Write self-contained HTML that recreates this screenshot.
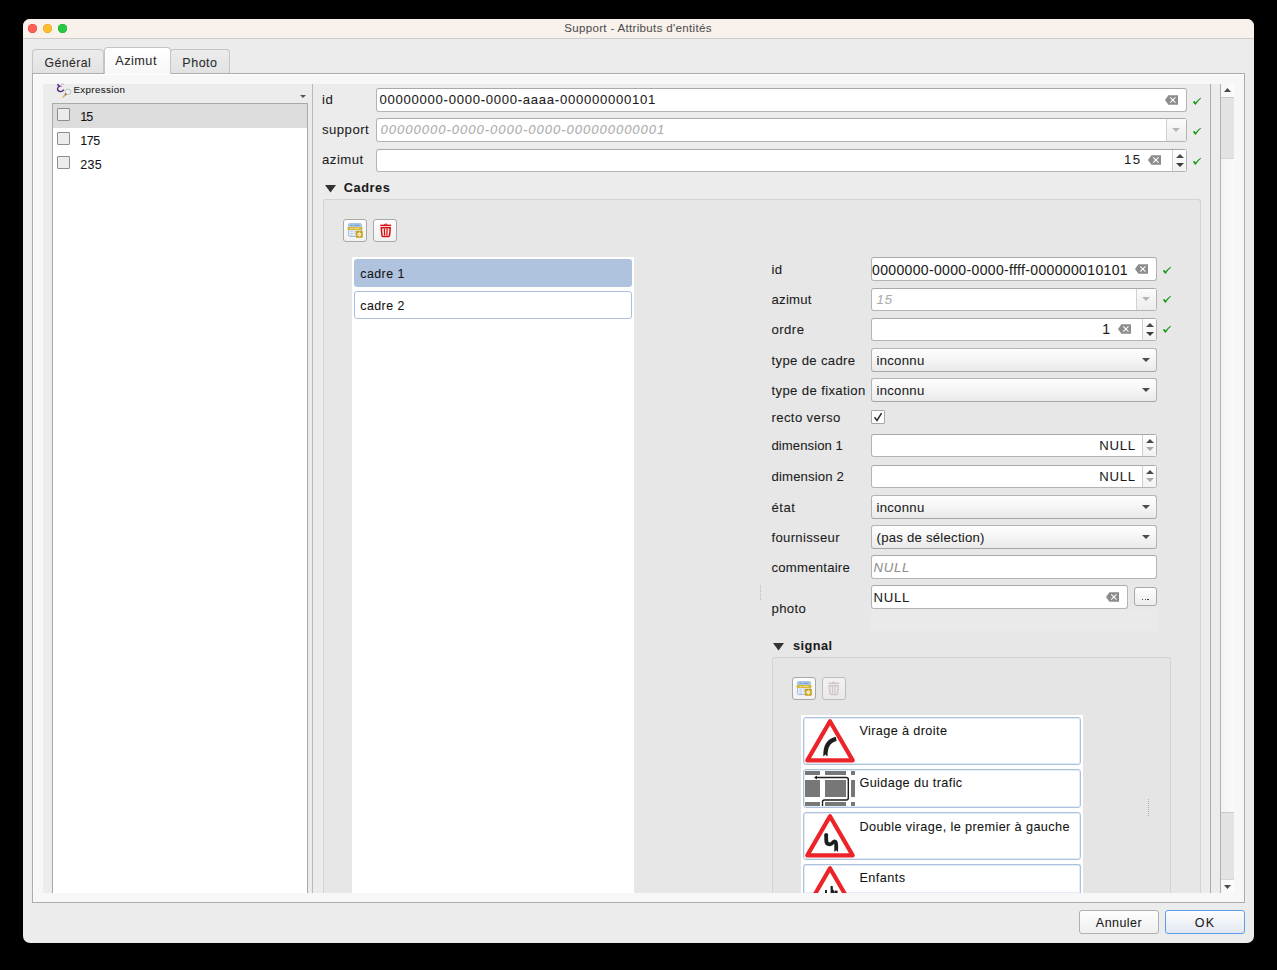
<!DOCTYPE html>
<html><head><meta charset="utf-8">
<style>
*{box-sizing:border-box;margin:0;padding:0}
html,body{width:1277px;height:970px;overflow:hidden;background:#000;font-family:"Liberation Sans",sans-serif;color:#1e1e1e}
.a{position:absolute}
.t{white-space:nowrap;-webkit-text-stroke:0.08px currentColor}
svg{overflow:visible}
</style></head><body>
<div class="a" style="left:23px;top:19px;width:1231px;height:924px;background:#ececec;border-radius:7px"></div>
<div class="a" style="left:23px;top:19px;width:1231px;height:20px;background:#f8f1ec;border-radius:7px 7px 0 0;border-bottom:1px solid #cfcbc8"></div>
<div class="a" style="left:27.8px;top:23.7px;width:9.4px;height:9.4px;border-radius:50%;background:#fe5f57;box-shadow:inset 0 0 0 0.5px #e0443e"></div>
<div class="a" style="left:42.8px;top:23.7px;width:9.4px;height:9.4px;border-radius:50%;background:#febc2e;box-shadow:inset 0 0 0 0.5px #dea123"></div>
<div class="a" style="left:57.8px;top:23.7px;width:9.4px;height:9.4px;border-radius:50%;background:#28c840;box-shadow:inset 0 0 0 0.5px #1aab29"></div>
<div class="a t" style="left:338px;width:600px;text-align:center;top:22.61px;font-size:11.56px;line-height:11.56px;color:#505050;letter-spacing:0.321px;">Support - Attributs d'entités</div>
<div class="a" style="left:32px;top:49px;width:72px;height:25px;border:1px solid #c4c4c4;border-bottom:none;border-radius:4px 4px 0 0;background:linear-gradient(#ececec,#e2e2e2)"></div>
<div class="a" style="left:170px;top:49px;width:60px;height:25px;border:1px solid #c4c4c4;border-bottom:none;border-radius:4px 4px 0 0;background:linear-gradient(#ececec,#e2e2e2)"></div>
<div class="a" style="left:32px;top:73px;width:1213px;height:830px;border:1px solid #acacac;background:#f7f7f7;box-shadow:inset 1px 1px 0 #fff"></div>
<div class="a" style="left:104px;top:47px;width:67px;height:27px;border:1px solid #c4c4c4;border-bottom:none;border-radius:4px 4px 0 0;background:linear-gradient(#ffffff,#f7f7f7)"></div>
<div class="a t" style="left:44.5px;top:56.86px;font-size:12.22px;line-height:12.22px;color:#2b2b2b;letter-spacing:0.461px;">Général</div>
<div class="a t" style="left:115.2px;top:55.26px;font-size:12.69px;line-height:12.69px;color:#2b2b2b;letter-spacing:0.497px;">Azimut</div>
<div class="a t" style="left:182.3px;top:56.62px;font-size:12.5px;line-height:12.5px;color:#2b2b2b;letter-spacing:0.520px;">Photo</div>
<div class="a" style="left:43px;top:84px;width:270px;height:809px;background:#ececec"></div>
<div class="a" style="left:312px;top:84px;width:1px;height:809px;background:#b9b9b9"></div>
<div class="a" style="left:313px;top:84px;width:897px;height:809px;background:#ececec"></div>
<div class="a" style="left:1210px;top:84px;width:1px;height:809px;background:#ababab"></div>
<div class="a" style="left:1211px;top:84px;width:9px;height:809px;background:#ececec"></div>
<div class="a" style="left:1220px;top:84px;width:1px;height:809px;background:#b0b0b0"></div>
<div class="a" style="left:1221px;top:84px;width:13px;height:809px;background:linear-gradient(90deg,#f3f3f3,#fafafa)"></div>
<div class="a" style="left:52px;top:103px;width:256px;height:790px;background:#fff;border:1px solid #a9a9a9;border-bottom:none"></div>
<div class="a" style="left:53px;top:104px;width:254px;height:24px;background:#dcdcdc"></div>
<div class="a" style="left:57px;top:108px;width:13px;height:13px;background:#ececec;border:1px solid #8e8e8e;border-radius:1px"></div>
<div class="a t" style="left:80.3px;top:110.82px;font-size:12.5px;line-height:12.5px;color:#141414;letter-spacing:-1.006px;">15</div>
<div class="a" style="left:57px;top:132px;width:13px;height:13px;background:#ececec;border:1px solid #8e8e8e;border-radius:1px"></div>
<div class="a t" style="left:80.3px;top:134.82px;font-size:12.5px;line-height:12.5px;color:#141414;letter-spacing:-0.530px;">175</div>
<div class="a" style="left:57px;top:156px;width:13px;height:13px;background:#ececec;border:1px solid #8e8e8e;border-radius:1px"></div>
<div class="a t" style="left:80.3px;top:158.82px;font-size:12.5px;line-height:12.5px;color:#141414;letter-spacing:0.220px;">235</div>
<div class="a t" style="left:73.5px;top:84.52px;font-size:9.78px;line-height:9.78px;color:#1c1c1c;letter-spacing:0.344px;">Expression</div>
<svg class="a" style="left:300.0px;top:94.5px;" width="6" height="3" viewBox="0 0 6 3"><path d="M0 0 H6 L3.0 3 Z" fill="#555"/></svg>
<svg class="a" style="left:56px;top:83px;" width="16" height="15" viewBox="0 0 16 15"><path d="M1.6 1.0 Q2.0 2.7 3.8 3.2 Q1.7 3.8 1.5 5.8 Q1.5 8.5 4.5 8.6 Q6.8 8.6 7.8 6.6" fill="none" stroke="#5b2b7c" stroke-width="1.4"/><path d="M5 1.2 H8.2" stroke="#b9a3c8" stroke-width="0.8"/><circle cx="12" cy="8.8" r="2.7" fill="#f2f2f2" stroke="#b8b8b8" stroke-width="0.9"/><path d="M10.2 10.8 L8.8 12.3" stroke="#3a3a3a" stroke-width="1.3"/><path d="M8.9 12.2 L7.2 14" stroke="#e2b84c" stroke-width="1.7" stroke-linecap="round"/></svg>
<div class="a t" style="left:322px;top:93.16px;font-size:13.16px;line-height:13.16px;color:#1c1c1c;letter-spacing:0.656px;">id</div>
<div class="a t" style="left:322px;top:123.16px;font-size:13.16px;line-height:13.16px;color:#1c1c1c;letter-spacing:0.469px;">support</div>
<div class="a t" style="left:322px;top:153.26px;font-size:13.16px;line-height:13.16px;color:#1c1c1c;letter-spacing:0.497px;">azimut</div>
<div class="a" style="left:376px;top:88px;width:811px;height:24px;background:#fff;border:1px solid #b4b4b4;border-radius:3px;border-top-color:#a9a9a9"></div>
<div class="a t" style="left:379.5px;top:93.16px;font-size:13.16px;line-height:13.16px;color:#1c1c1c;letter-spacing:0.691px;">00000000-0000-0000-aaaa-000000000101</div>
<svg class="a" style="left:1165px;top:95px;" width="13" height="10" viewBox="0 0 13 10"><path d="M0 5 L3.4 0.2 H13 V9.8 H3.4 Z" fill="#8c8c8c"/><path d="M5.2 2.4 L10.5 7.6 M10.5 2.4 L5.2 7.6" stroke="#fff" stroke-width="1.1"/></svg>
<svg class="a" style="left:1193px;top:98px;" width="8" height="7" viewBox="0 0 8 7"><path d="M0 3.9 Q0.6 3.0 1.5 3.1 L2.6 4.4 Q5 1.4 7.6 -0.2 Q8.2 0.1 7.9 0.6 Q5.2 3 2.9 6.4 Q2.4 6.9 1.9 6.4 Z" fill="#109a10"/></svg>
<div class="a" style="left:376px;top:118px;width:811px;height:24px;background:#fff;border:1px solid #b4b4b4;border-radius:3px;border-top-color:#a9a9a9"></div>
<div class="a" style="left:1166px;top:119px;width:20px;height:22px;border-left:1px solid #d2d2d2;background:linear-gradient(#fbfbfb,#ececec)"></div>
<svg class="a" style="left:1171.7px;top:128.0px;" width="8" height="4" viewBox="0 0 8 4"><path d="M0 0 H8 L4.0 4 Z" fill="#b5b5b5"/></svg>
<div class="a t" style="left:380.5px;top:123.16px;font-size:13.16px;line-height:13.16px;color:#acacac;font-style:italic;letter-spacing:0.921px;">00000000-0000-0000-0000-000000000001</div>
<svg class="a" style="left:1193px;top:128px;" width="8" height="7" viewBox="0 0 8 7"><path d="M0 3.9 Q0.6 3.0 1.5 3.1 L2.6 4.4 Q5 1.4 7.6 -0.2 Q8.2 0.1 7.9 0.6 Q5.2 3 2.9 6.4 Q2.4 6.9 1.9 6.4 Z" fill="#109a10"/></svg>
<div class="a" style="left:376px;top:149px;width:811px;height:23px;background:#fff;border:1px solid #b4b4b4;border-radius:3px;border-top-color:#a9a9a9"></div>
<div class="a" style="left:1172px;top:150px;width:14px;height:21px;border-left:1px solid #d0d0d0;background:linear-gradient(#ffffff,#f2f2f2)"></div>
<svg class="a" style="left:1175.5px;top:154.2px;" width="8" height="4" viewBox="0 0 8 4"><path d="M0 4 H8 L4.0 0 Z" fill="#4a4a4a"/></svg>
<svg class="a" style="left:1175.5px;top:162.5px;" width="8" height="4" viewBox="0 0 8 4"><path d="M0 0 H8 L4.0 4 Z" fill="#3c3c3c"/></svg>
<div class="a t" style="right:137px;top:153.26px;font-size:13.16px;line-height:13.16px;color:#1c1c1c;letter-spacing:1.247px;margin-right:-1.247px;">15</div>
<svg class="a" style="left:1148px;top:154.5px;" width="13" height="10" viewBox="0 0 13 10"><path d="M0 5 L3.4 0.2 H13 V9.8 H3.4 Z" fill="#8c8c8c"/><path d="M5.2 2.4 L10.5 7.6 M10.5 2.4 L5.2 7.6" stroke="#fff" stroke-width="1.1"/></svg>
<svg class="a" style="left:1193px;top:158px;" width="8" height="7" viewBox="0 0 8 7"><path d="M0 3.9 Q0.6 3.0 1.5 3.1 L2.6 4.4 Q5 1.4 7.6 -0.2 Q8.2 0.1 7.9 0.6 Q5.2 3 2.9 6.4 Q2.4 6.9 1.9 6.4 Z" fill="#109a10"/></svg>
<svg class="a" style="left:324.5px;top:185px;" width="11" height="7.5" viewBox="0 0 11 7.5"><path d="M0 0 H11 L5.5 7.5 Z" fill="#333"/></svg>
<div class="a t" style="left:343.8px;top:181.98px;font-size:12.78px;line-height:12.78px;color:#1c1c1c;font-weight:bold;letter-spacing:0.559px;">Cadres</div>
<div class="a" style="left:323px;top:199px;width:878px;height:694px;background:#e7e7e7;border:1px solid #d3d3d3;border-bottom:none;border-radius:3px 3px 0 0"></div>
<div class="a" style="left:343px;top:219px;width:24px;height:23px;background:linear-gradient(#fdfdfd,#f1f1f1);border:1px solid #a9a9a9;border-radius:3px"></div>
<svg class="a" style="left:348px;top:223px;" width="15" height="15" viewBox="0 0 15 15"><rect x="0.5" y="0.5" width="13" height="13" rx="1.5" fill="#e6edf6" stroke="#a3c0e0"/><rect x="0.5" y="0.5" width="13" height="3.6" rx="1" fill="#a9c8e8"/><path d="M2.5 2.3 H4.8 M6.2 2.3 H11.5" stroke="#6a93c6" stroke-width="0.9"/><path d="M2.5 8.3 H4.8 M6.2 8.3 H8 M2.5 10.4 H4.8 M6.2 10.4 H8 M2.5 12.2 H4.8" stroke="#b3c9e6" stroke-width="0.9"/><rect x="-0.6" y="3.9" width="15.2" height="3" rx="1.4" fill="#d8b633"/><path d="M2.5 5.4 H4.8 M6.2 5.4 H11.5" stroke="#f3e6a8" stroke-width="0.9"/><rect x="7.8" y="7.8" width="7" height="7" rx="1" fill="#c9a21f"/><polygon points="11.30,8.60 11.98,10.13 13.64,9.95 12.65,11.30 13.64,12.65 11.98,12.47 11.30,14.00 10.63,12.47 8.96,12.65 9.95,11.30 8.96,9.95 10.62,10.13" fill="#fffbe6"/><circle cx="11.3" cy="11.3" r="0.6" fill="#d9b845"/></svg>
<div class="a" style="left:373px;top:219px;width:24px;height:23px;background:linear-gradient(#fdfdfd,#f1f1f1);border:1px solid #a9a9a9;border-radius:3px"></div>
<svg class="a" style="left:379.5px;top:223px;" width="12" height="14" viewBox="0 0 12 14"><path d="M0.3 2.4 H11.2" stroke="#d90f0f" stroke-width="1.5"/><path d="M4.2 1.7 Q5.75 0.2 7.3 1.7" fill="none" stroke="#d90f0f" stroke-width="1"/><path d="M1.2 4.8 H10.3 L9.5 12.6 Q9.4 13.4 8.6 13.4 H2.9 Q2.1 13.4 2 12.6 Z" fill="none" stroke="#d90f0f" stroke-width="1.5" stroke-linejoin="round"/><path d="M4.4 5.5 L4.6 12.6 M7.1 5.5 L6.9 12.6" stroke="#d90f0f" stroke-width="1.3"/></svg>
<div class="a" style="left:352px;top:257px;width:282px;height:636px;background:#fff"></div>
<div class="a" style="left:354px;top:259px;width:278px;height:28px;background:#b0c3de;border-radius:3px"></div>
<div class="a t" style="left:360.3px;top:267.59px;font-size:12.41px;line-height:12.41px;color:#141414;letter-spacing:0.435px;">cadre 1</div>
<div class="a" style="left:354px;top:291px;width:278px;height:28px;background:#fff;border:1px solid #a9bfdd;border-radius:3px"></div>
<div class="a t" style="left:360.3px;top:299.89px;font-size:12.41px;line-height:12.41px;color:#141414;letter-spacing:0.435px;">cadre 2</div>
<div class="a t" style="left:771.5px;top:262.66px;font-size:13.16px;line-height:13.16px;color:#1c1c1c;letter-spacing:0.350px;">id</div>
<div class="a t" style="left:771.5px;top:292.66px;font-size:13.16px;line-height:13.16px;color:#1c1c1c;letter-spacing:0.250px;">azimut</div>
<div class="a t" style="left:771.5px;top:322.66px;font-size:13.16px;line-height:13.16px;color:#1c1c1c;letter-spacing:0.445px;">ordre</div>
<div class="a t" style="left:771.5px;top:353.66px;font-size:13.16px;line-height:13.16px;color:#1c1c1c;letter-spacing:0.322px;">type de cadre</div>
<div class="a t" style="left:771.5px;top:383.66px;font-size:13.16px;line-height:13.16px;color:#1c1c1c;letter-spacing:0.353px;">type de fixation</div>
<div class="a t" style="left:771.5px;top:410.66px;font-size:13.16px;line-height:13.16px;color:#1c1c1c;letter-spacing:0.362px;">recto verso</div>
<div class="a t" style="left:771.5px;top:438.66px;font-size:13.16px;line-height:13.16px;color:#1c1c1c;letter-spacing:0.045px;">dimension 1</div>
<div class="a t" style="left:771.5px;top:469.66px;font-size:13.16px;line-height:13.16px;color:#1c1c1c;letter-spacing:0.145px;">dimension 2</div>
<div class="a t" style="left:771.5px;top:501.16px;font-size:13.16px;line-height:13.16px;color:#1c1c1c;letter-spacing:0.516px;">état</div>
<div class="a t" style="left:771.5px;top:530.66px;font-size:13.16px;line-height:13.16px;color:#1c1c1c;letter-spacing:0.301px;">fournisseur</div>
<div class="a t" style="left:771.5px;top:560.66px;font-size:13.16px;line-height:13.16px;color:#1c1c1c;letter-spacing:0.225px;">commentaire</div>
<div class="a t" style="left:771.5px;top:602.16px;font-size:13.16px;line-height:13.16px;color:#1c1c1c;letter-spacing:0.341px;">photo</div>
<div class="a" style="left:871px;top:257px;width:286px;height:24px;background:#fff;border:1px solid #b4b4b4;border-radius:3px;border-top-color:#a9a9a9"></div>
<div class="a" style="left:872px;top:258px;width:256px;height:22px;overflow:hidden">
<div class="a t" style="left:0;top:4.5px;font-size:14px;line-height:14px;letter-spacing:0.35px;color:#1c1c1c">0000000-0000-0000-ffff-000000010101</div>
</div>
<svg class="a" style="left:1135px;top:264px;" width="13" height="10" viewBox="0 0 13 10"><path d="M0 5 L3.4 0.2 H13 V9.8 H3.4 Z" fill="#8c8c8c"/><path d="M5.2 2.4 L10.5 7.6 M10.5 2.4 L5.2 7.6" stroke="#fff" stroke-width="1.1"/></svg>
<svg class="a" style="left:1163px;top:267px;" width="8" height="7" viewBox="0 0 8 7"><path d="M0 3.9 Q0.6 3.0 1.5 3.1 L2.6 4.4 Q5 1.4 7.6 -0.2 Q8.2 0.1 7.9 0.6 Q5.2 3 2.9 6.4 Q2.4 6.9 1.9 6.4 Z" fill="#109a10"/></svg>
<div class="a" style="left:871px;top:288px;width:286px;height:23px;background:#fff;border:1px solid #b4b4b4;border-radius:3px;border-top-color:#a9a9a9"></div>
<div class="a" style="left:1136px;top:289px;width:20px;height:21px;border-left:1px solid #d2d2d2;background:linear-gradient(#fbfbfb,#ececec)"></div>
<svg class="a" style="left:1142.0px;top:297.0px;" width="8" height="4" viewBox="0 0 8 4"><path d="M0 0 H8 L4.0 4 Z" fill="#b5b5b5"/></svg>
<div class="a t" style="left:876.5px;top:292.66px;font-size:13.16px;line-height:13.16px;color:#acacac;font-style:italic;letter-spacing:0.938px;">15</div>
<svg class="a" style="left:1163px;top:296px;" width="8" height="7" viewBox="0 0 8 7"><path d="M0 3.9 Q0.6 3.0 1.5 3.1 L2.6 4.4 Q5 1.4 7.6 -0.2 Q8.2 0.1 7.9 0.6 Q5.2 3 2.9 6.4 Q2.4 6.9 1.9 6.4 Z" fill="#109a10"/></svg>
<div class="a" style="left:871px;top:318px;width:286px;height:23px;background:#fff;border:1px solid #b4b4b4;border-radius:3px;border-top-color:#a9a9a9"></div>
<div class="a" style="left:1142px;top:319px;width:14px;height:21px;border-left:1px solid #d0d0d0;background:linear-gradient(#ffffff,#f2f2f2)"></div>
<svg class="a" style="left:1145.5px;top:322.8px;" width="8" height="4" viewBox="0 0 8 4"><path d="M0 4 H8 L4.0 0 Z" fill="#4a4a4a"/></svg>
<svg class="a" style="left:1145.5px;top:331.5px;" width="8" height="4" viewBox="0 0 8 4"><path d="M0 0 H8 L4.0 4 Z" fill="#3c3c3c"/></svg>
<div class="a t" style="right:167px;top:321.95px;font-size:14px;line-height:14px;color:#1c1c1c;">1</div>
<svg class="a" style="left:1118px;top:323.5px;" width="13" height="10" viewBox="0 0 13 10"><path d="M0 5 L3.4 0.2 H13 V9.8 H3.4 Z" fill="#8c8c8c"/><path d="M5.2 2.4 L10.5 7.6 M10.5 2.4 L5.2 7.6" stroke="#fff" stroke-width="1.1"/></svg>
<svg class="a" style="left:1163px;top:326px;" width="8" height="7" viewBox="0 0 8 7"><path d="M0 3.9 Q0.6 3.0 1.5 3.1 L2.6 4.4 Q5 1.4 7.6 -0.2 Q8.2 0.1 7.9 0.6 Q5.2 3 2.9 6.4 Q2.4 6.9 1.9 6.4 Z" fill="#109a10"/></svg>
<div class="a" style="left:871px;top:348px;width:286px;height:24px;background:linear-gradient(#fefefe,#f7f7f7 40%,#eaeaea);border:1px solid #b4b4b4;border-radius:3px;border-bottom-color:#a5a5a5"></div>
<svg class="a" style="left:1142.0px;top:358.0px;" width="8" height="4" viewBox="0 0 8 4"><path d="M0 0 H8 L4.0 4 Z" fill="#4b4b4b"/></svg>
<div class="a t" style="left:876.5px;top:353.66px;font-size:13.16px;line-height:13.16px;color:#1c1c1c;letter-spacing:0.268px;">inconnu</div>
<div class="a" style="left:871px;top:378px;width:286px;height:24px;background:linear-gradient(#fefefe,#f7f7f7 40%,#eaeaea);border:1px solid #b4b4b4;border-radius:3px;border-bottom-color:#a5a5a5"></div>
<svg class="a" style="left:1142.0px;top:388.0px;" width="8" height="4" viewBox="0 0 8 4"><path d="M0 0 H8 L4.0 4 Z" fill="#4b4b4b"/></svg>
<div class="a t" style="left:876.5px;top:383.66px;font-size:13.16px;line-height:13.16px;color:#1c1c1c;letter-spacing:0.268px;">inconnu</div>
<div class="a" style="left:871px;top:495px;width:286px;height:24px;background:linear-gradient(#fefefe,#f7f7f7 40%,#eaeaea);border:1px solid #b4b4b4;border-radius:3px;border-bottom-color:#a5a5a5"></div>
<svg class="a" style="left:1142.0px;top:505.0px;" width="8" height="4" viewBox="0 0 8 4"><path d="M0 0 H8 L4.0 4 Z" fill="#4b4b4b"/></svg>
<div class="a t" style="left:876.5px;top:500.66px;font-size:13.16px;line-height:13.16px;color:#1c1c1c;letter-spacing:0.268px;">inconnu</div>
<div class="a" style="left:871px;top:525px;width:286px;height:24px;background:linear-gradient(#fefefe,#f7f7f7 40%,#eaeaea);border:1px solid #b4b4b4;border-radius:3px;border-bottom-color:#a5a5a5"></div>
<svg class="a" style="left:1142.0px;top:535.0px;" width="8" height="4" viewBox="0 0 8 4"><path d="M0 0 H8 L4.0 4 Z" fill="#4b4b4b"/></svg>
<div class="a t" style="left:876.5px;top:530.66px;font-size:13.16px;line-height:13.16px;color:#1c1c1c;letter-spacing:0.244px;">(pas de sélection)</div>
<div class="a" style="left:871px;top:410px;width:14px;height:14px;background:#fff;border:1px solid #a8a8a8;border-radius:1px"></div>
<svg class="a" style="left:873px;top:412px;" width="10" height="10" viewBox="0 0 10 10"><path d="M1.5 5.2 L4 8.4 L8.6 1.2" fill="none" stroke="#2a2a2a" stroke-width="1.5"/></svg>
<div class="a" style="left:871px;top:434px;width:286px;height:23px;background:#fff;border:1px solid #b4b4b4;border-radius:3px;border-top-color:#a9a9a9"></div>
<div class="a" style="left:1142px;top:435px;width:14px;height:21px;border-left:1px solid #d0d0d0;background:linear-gradient(#ffffff,#f2f2f2)"></div>
<svg class="a" style="left:1145.5px;top:439.0px;" width="8" height="4" viewBox="0 0 8 4"><path d="M0 4 H8 L4.0 0 Z" fill="#4a4a4a"/></svg>
<svg class="a" style="left:1145.5px;top:447.0px;" width="8" height="4" viewBox="0 0 8 4"><path d="M0 0 H8 L4.0 4 Z" fill="#a8a8a8"/></svg>
<div class="a t" style="right:142px;top:438.66px;font-size:13.16px;line-height:13.16px;color:#1c1c1c;letter-spacing:0.719px;margin-right:-0.719px;">NULL</div>
<div class="a" style="left:871px;top:465px;width:286px;height:23px;background:#fff;border:1px solid #b4b4b4;border-radius:3px;border-top-color:#a9a9a9"></div>
<div class="a" style="left:1142px;top:466px;width:14px;height:21px;border-left:1px solid #d0d0d0;background:linear-gradient(#ffffff,#f2f2f2)"></div>
<svg class="a" style="left:1145.5px;top:470.0px;" width="8" height="4" viewBox="0 0 8 4"><path d="M0 4 H8 L4.0 0 Z" fill="#4a4a4a"/></svg>
<svg class="a" style="left:1145.5px;top:478.0px;" width="8" height="4" viewBox="0 0 8 4"><path d="M0 0 H8 L4.0 4 Z" fill="#a8a8a8"/></svg>
<div class="a t" style="right:142px;top:469.66px;font-size:13.16px;line-height:13.16px;color:#1c1c1c;letter-spacing:0.719px;margin-right:-0.719px;">NULL</div>
<div class="a" style="left:871px;top:555px;width:286px;height:24px;background:#fff;border:1px solid #b4b4b4;border-radius:3px;border-top-color:#a9a9a9"></div>
<div class="a t" style="left:873.5px;top:560.66px;font-size:13.16px;line-height:13.16px;color:#8f8f8f;font-style:italic;letter-spacing:0.719px;">NULL</div>
<div class="a" style="left:871px;top:609px;width:286px;height:22px;background:#eaeaea"></div>
<div class="a" style="left:871px;top:585px;width:257px;height:24px;background:#fff;border:1px solid #b4b4b4;border-radius:3px;border-top-color:#a9a9a9"></div>
<div class="a t" style="left:873.5px;top:590.66px;font-size:13.16px;line-height:13.16px;color:#1c1c1c;letter-spacing:0.719px;">NULL</div>
<svg class="a" style="left:1106px;top:592px;" width="13" height="10" viewBox="0 0 13 10"><path d="M0 5 L3.4 0.2 H13 V9.8 H3.4 Z" fill="#8c8c8c"/><path d="M5.2 2.4 L10.5 7.6 M10.5 2.4 L5.2 7.6" stroke="#fff" stroke-width="1.1"/></svg>
<div class="a" style="left:1134px;top:587px;width:23px;height:19px;background:linear-gradient(#fefefe,#ececec);border:1px solid #a9a9a9;border-radius:3px"></div>
<div class="a" style="left:1141.8px;top:598.6px;width:1.6px;height:1.6px;background:#222;border-radius:50%"></div>
<div class="a" style="left:1144.6px;top:598.6px;width:1.6px;height:1.6px;background:#222;border-radius:50%"></div>
<div class="a" style="left:1147.4px;top:598.6px;width:1.6px;height:1.6px;background:#222;border-radius:50%"></div>
<svg class="a" style="left:773px;top:643px;" width="11" height="7.5" viewBox="0 0 11 7.5"><path d="M0 0 H11 L5.5 7.5 Z" fill="#333"/></svg>
<div class="a t" style="left:792.9px;top:639.98px;font-size:12.78px;line-height:12.78px;color:#1c1c1c;font-weight:bold;letter-spacing:0.478px;">signal</div>
<div class="a" style="left:772px;top:657px;width:399px;height:236px;background:#e5e5e5;border:1px solid #d3d3d3;border-bottom:none;border-radius:3px 3px 0 0"></div>
<div class="a" style="left:792px;top:677px;width:24px;height:23px;background:linear-gradient(#fdfdfd,#f1f1f1);border:1px solid #a9a9a9;border-radius:3px"></div>
<svg class="a" style="left:796.5px;top:681px;" width="15" height="15" viewBox="0 0 15 15"><rect x="0.5" y="0.5" width="13" height="13" rx="1.5" fill="#e6edf6" stroke="#a3c0e0"/><rect x="0.5" y="0.5" width="13" height="3.6" rx="1" fill="#a9c8e8"/><path d="M2.5 2.3 H4.8 M6.2 2.3 H11.5" stroke="#6a93c6" stroke-width="0.9"/><path d="M2.5 8.3 H4.8 M6.2 8.3 H8 M2.5 10.4 H4.8 M6.2 10.4 H8 M2.5 12.2 H4.8" stroke="#b3c9e6" stroke-width="0.9"/><rect x="-0.6" y="3.9" width="15.2" height="3" rx="1.4" fill="#d8b633"/><path d="M2.5 5.4 H4.8 M6.2 5.4 H11.5" stroke="#f3e6a8" stroke-width="0.9"/><rect x="7.8" y="7.8" width="7" height="7" rx="1" fill="#c9a21f"/><polygon points="11.30,8.60 11.98,10.13 13.64,9.95 12.65,11.30 13.64,12.65 11.98,12.47 11.30,14.00 10.63,12.47 8.96,12.65 9.95,11.30 8.96,9.95 10.62,10.13" fill="#fffbe6"/><circle cx="11.3" cy="11.3" r="0.6" fill="#d9b845"/></svg>
<div class="a" style="left:822px;top:677px;width:24px;height:23px;background:linear-gradient(#f2f2f2,#e9e9e9);border:1px solid #bdbdbd;border-radius:3px"></div>
<svg class="a" style="left:828px;top:681px;" width="12" height="14" viewBox="0 0 12 14"><path d="M0.3 2.4 H11.2" stroke="#d2c4c4" stroke-width="1.5"/><path d="M4.2 1.7 Q5.75 0.2 7.3 1.7" fill="none" stroke="#d2c4c4" stroke-width="1"/><path d="M1.2 4.8 H10.3 L9.5 12.6 Q9.4 13.4 8.6 13.4 H2.9 Q2.1 13.4 2 12.6 Z" fill="none" stroke="#d2c4c4" stroke-width="1.5" stroke-linejoin="round"/><path d="M4.4 5.5 L4.6 12.6 M7.1 5.5 L6.9 12.6" stroke="#d2c4c4" stroke-width="1.3"/></svg>
<div class="a" style="left:801px;top:715px;width:282px;height:178px;background:#fff"></div>
<div class="a" style="left:803px;top:717px;width:278px;height:48px;background:#fff;border:1px solid #abc1de;border-radius:3px;box-shadow:inset 0 0 0 1px #e3ebf5"></div>
<div class="a t" style="left:859.4px;top:725.36px;font-size:12.69px;line-height:12.69px;color:#141414;letter-spacing:0.376px;">Virage à droite</div>
<div class="a" style="left:803px;top:769px;width:278px;height:39px;background:#fff;border:1px solid #abc1de;border-radius:3px;box-shadow:inset 0 0 0 1px #e3ebf5"></div>
<div class="a t" style="left:859.4px;top:777.06px;font-size:12.69px;line-height:12.69px;color:#141414;letter-spacing:0.387px;">Guidage du trafic</div>
<div class="a" style="left:803px;top:812px;width:278px;height:48px;background:#fff;border:1px solid #abc1de;border-radius:3px;box-shadow:inset 0 0 0 1px #e3ebf5"></div>
<div class="a t" style="left:859.4px;top:820.66px;font-size:12.69px;line-height:12.69px;color:#141414;letter-spacing:0.383px;">Double virage, le premier à gauche</div>
<div class="a" style="left:803px;top:864px;width:278px;height:29px;background:#fff;border:1px solid #abc1de;border-radius:3px;box-shadow:inset 0 0 0 1px #e3ebf5;border-bottom:none;border-radius:3px 3px 0 0"></div>
<div class="a t" style="left:859.4px;top:872.16px;font-size:12.69px;line-height:12.69px;color:#141414;letter-spacing:0.458px;">Enfants</div>
<svg class="a" style="left:805px;top:719px;" width="50" height="44" viewBox="0 0 50 44"><path d="M25 2.2 L2.3 41.4 H47.7 Z" fill="#fff" stroke="#ec2329" stroke-width="4.2" stroke-linejoin="round"/><path d="M20.4 37.2 C20.2 28 23 21.5 31.2 19.8" fill="none" stroke="#1e1e1e" stroke-width="4.3"/><path d="M18.2 37.8 L20.4 35.4 L22.6 37.8 Z" fill="#fff"/></svg>
<svg class="a" style="left:805px;top:771px;" width="50" height="35" viewBox="0 0 50 35"><g fill="#777"><rect x="0" y="0" width="15" height="4"/><rect x="20" y="0" width="21" height="4"/><rect x="46" y="0" width="4" height="4"/><rect x="0" y="9" width="15" height="17"/><rect x="20" y="9" width="21" height="17"/><rect x="46" y="9" width="4" height="17"/><rect x="0" y="31" width="15" height="4"/><rect x="20" y="31" width="21" height="4"/><rect x="46" y="31" width="4" height="4"/></g><path d="M17.5 35 V31 Q17.5 29 19.5 29 H41.3 Q43.3 29 43.3 27 V8.5 Q43.3 6.5 41.3 6.5 H10.5" fill="none" stroke="#1e1e1e" stroke-width="1.4"/><path d="M9 6.5 L12 4.6 V8.4 Z" fill="#1e1e1e"/></svg>
<svg class="a" style="left:805px;top:814px;" width="50" height="44" viewBox="0 0 50 44"><path d="M25 2.2 L2.3 41.4 H47.7 Z" fill="#fff" stroke="#ec2329" stroke-width="4.2" stroke-linejoin="round"/><path d="M21.2 20.8 V26 Q21.2 30.3 24.5 30.3 Q26.5 30.3 28 28.4 Q29.2 27 30.2 27.6 Q31.2 28.4 31.2 31 V37.8" fill="none" stroke="#1e1e1e" stroke-width="3.8" stroke-linecap="butt"/><circle cx="21.2" cy="20.8" r="1.9" fill="#1e1e1e"/><path d="M29.1 38.4 L31.2 36.3 L33.3 38.4 Z" fill="#fff"/></svg>
<div class="a" style="left:804px;top:865px;width:276px;height:28px;overflow:hidden">
<svg class="a" style="left:1px;top:1px;" width="50" height="44" viewBox="0 0 50 44"><path d="M25 2.2 L2.3 41.4 H47.7 Z" fill="#fff" stroke="#ec2329" stroke-width="4.2" stroke-linejoin="round"/><g fill="#1e1e1e"><rect x="20" y="24" width="2" height="3"/><path d="M25.6 20 H27.8 V23 L29.6 25.8 V27 H25.6 Z"/><rect x="29.6" y="24.6" width="3" height="2.4"/></g></svg>
</div>
<div class="a" style="left:33px;top:893px;width:1211px;height:9px;background:#f7f7f7"></div>
<div class="a" style="left:1221px;top:84px;width:13px;height:13px;background:linear-gradient(90deg,#f6f6f6,#fdfdfd)"></div>
<svg class="a" style="left:1224.0px;top:88.0px;" width="7" height="4" viewBox="0 0 7 4"><path d="M0 4 H7 L3.5 0 Z" fill="#4a4a4a"/></svg>
<div class="a" style="left:1221px;top:97px;width:13px;height:62px;background:#e3e3e3;border-top:1px solid #c9c9c9;border-bottom:1px solid #d6d6d6"></div>
<div class="a" style="left:1221px;top:812px;width:13px;height:68px;background:#e3e3e3;border-top:1px solid #c9c9c9;border-bottom:1px solid #d6d6d6"></div>
<div class="a" style="left:1221px;top:880px;width:13px;height:13px;background:linear-gradient(90deg,#f6f6f6,#fdfdfd)"></div>
<svg class="a" style="left:1224.0px;top:884.5px;" width="7" height="4" viewBox="0 0 7 4"><path d="M0 0 H7 L3.5 4 Z" fill="#4a4a4a"/></svg>
<div class="a" style="left:1148px;top:799px;width:1px;height:1px;background:#b0b0b0"></div>
<div class="a" style="left:1148px;top:801px;width:1px;height:1px;background:#b0b0b0"></div>
<div class="a" style="left:1148px;top:803px;width:1px;height:1px;background:#b0b0b0"></div>
<div class="a" style="left:1148px;top:805px;width:1px;height:1px;background:#b0b0b0"></div>
<div class="a" style="left:1148px;top:807px;width:1px;height:1px;background:#b0b0b0"></div>
<div class="a" style="left:1148px;top:809px;width:1px;height:1px;background:#b0b0b0"></div>
<div class="a" style="left:1148px;top:811px;width:1px;height:1px;background:#b0b0b0"></div>
<div class="a" style="left:1148px;top:813px;width:1px;height:1px;background:#b0b0b0"></div>
<div class="a" style="left:1148px;top:815px;width:1px;height:1px;background:#b0b0b0"></div>
<div class="a" style="left:760px;top:585px;width:1px;height:1px;background:#bcbcbc"></div>
<div class="a" style="left:760px;top:587px;width:1px;height:1px;background:#bcbcbc"></div>
<div class="a" style="left:760px;top:589px;width:1px;height:1px;background:#bcbcbc"></div>
<div class="a" style="left:760px;top:591px;width:1px;height:1px;background:#bcbcbc"></div>
<div class="a" style="left:760px;top:593px;width:1px;height:1px;background:#bcbcbc"></div>
<div class="a" style="left:760px;top:595px;width:1px;height:1px;background:#bcbcbc"></div>
<div class="a" style="left:760px;top:597px;width:1px;height:1px;background:#bcbcbc"></div>
<div class="a" style="left:760px;top:599px;width:1px;height:1px;background:#bcbcbc"></div>
<div class="a" style="left:1079px;top:910px;width:80px;height:24px;background:linear-gradient(#fefefe,#efefef);border:1px solid #b0b0b0;border-radius:3px"></div>
<div class="a t" style="left:819px;width:600px;text-align:center;top:916.92px;font-size:12.5px;line-height:12.5px;color:#1a1a1a;letter-spacing:0.458px;">Annuler</div>
<div class="a" style="left:1165px;top:910px;width:80px;height:24px;background:linear-gradient(#fbfcfe,#e3e8f0);border:1px solid #5e9cec;border-radius:3px"></div>
<div class="a t" style="left:905px;width:600px;text-align:center;top:916.92px;font-size:12.5px;line-height:12.5px;color:#1a1a1a;letter-spacing:1.156px;">OK</div>
</body></html>
